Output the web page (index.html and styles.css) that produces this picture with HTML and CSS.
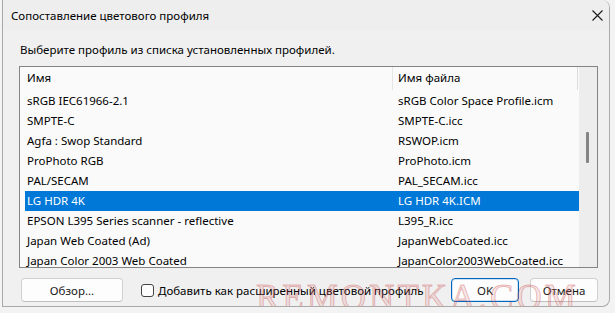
FILE: index.html
```html
<!DOCTYPE html>
<html>
<head>
	<title>Сопоставление цветового профиля</title>
	<link rel="stylesheet" href="styles.css">
</head>
<body>

	<div class="window">
		<!-- заголовок окна -->
		<div class="titlebar">
			<span class="title">Сопоставление цветового профиля</span>
			<span class="close">
				<svg width="11" height="11" viewBox="0 0 11 11"><path d="M0.5 0.5 L10.5 10.5 M10.5 0.5 L0.5 10.5" stroke="#1a1a1a" stroke-width="1.1" fill="none"/></svg>
			</span>
		</div>

		<div class="content">
			<div class="hint">Выберите профиль из списка установленных профилей.</div>

			<!-- список профилей -->
			<div class="listbox">
				<div class="list">
					<div class="row head"><span class="c1">Имя</span><span class="c2">Имя файла</span><span class="c3"></span></div>
					<div class="row"><span class="c1">sRGB IEC61966-2.1</span><span class="c2">sRGB Color Space Profile.icm</span></div>
					<div class="row"><span class="c1">SMPTE-C</span><span class="c2">SMPTE-C.icc</span></div>
					<div class="row"><span class="c1">Agfa : Swop Standard</span><span class="c2">RSWOP.icm</span></div>
					<div class="row"><span class="c1">ProPhoto RGB</span><span class="c2">ProPhoto.icm</span></div>
					<div class="row"><span class="c1">PAL/SECAM</span><span class="c2">PAL_SECAM.icc</span></div>
					<div class="row sel"><span class="c1">LG HDR 4K</span><span class="c2">LG HDR 4K.ICM</span></div>
					<div class="row"><span class="c1">EPSON L395 Series scanner - reflective</span><span class="c2">L395_R.icc</span></div>
					<div class="row"><span class="c1">Japan Web Coated (Ad)</span><span class="c2">JapanWebCoated.icc</span></div>
					<div class="row"><span class="c1">Japan Color 2003 Web Coated</span><span class="c2">JapanColor2003WebCoated.icc</span></div>
				</div>
				<div class="scrollbar"><div class="thumb"></div></div>
			</div>

			<!-- кнопки -->
			<div class="footer">
				<button class="btn browse">Обзор...</button>
				<label class="check"><span class="box"></span>Добавить как расширенный цветовой профиль</label>
				<button class="btn ok">OK</button>
				<button class="btn cancel">Отмена</button>
			</div>
		</div>

		<div class="watermark">REMONTKA.COM</div>
	</div>

</body>
</html>
```

FILE: styles.css
```css
* {
    box-sizing: border-box;
}

body {
    margin: 0;
    background: #f3f3f3;
    font-family: "Noto Sans", "Open Sans", sans-serif;
    font-size: 11.5px;
    color: #000;
}

.window {
    position: relative;
    margin-left: 2px;
    width: 608px;
    height: 307px;
    background: #f0f0f0;
    border: 1px solid #a9a9a9;
    border-top: none;
    border-radius: 0 8px 8px 0;
    overflow: hidden;
}

.titlebar {
    display: flex;
    align-items: center;
    justify-content: space-between;
    height: 30px;
    padding: 0 5px 0 8px;
    background: #eeeeee;
}

.close {
    display: flex;
    width: 14px;
    justify-content: center;
}

.content {
    padding: 0 11px 0 16px;
}

.hint {
    height: 36px;
    line-height: 16px;
    padding-top: 12px;
    padding-left: 1px;
}

.listbox {
    display: flex;
    height: 202px;
    border: 1px solid #848484;
    background: #fafafa;
    overflow: hidden;
}

.list {
    flex: 1;
    padding-left: 5px;
}

.row {
    display: flex;
    height: 20px;
    line-height: 20px;
    white-space: nowrap;
}

.row.head {
    height: 24px;
    line-height: 22px;
}

.c1 {
    width: 367px;
    padding-left: 2px;
}

.c2 {
    flex: 1;
    padding-left: 6px;
}

.head .c2 {
    border-left: 1px solid #e5e5e5;
    padding-left: 5px;
    margin-bottom: 1px;
}

.head .c3 {
    width: 2px;
    border-left: 1px solid #dcdcdc;
    margin-bottom: 1px;
}

.row.sel {
    background: #0078d7;
    color: #fff;
}

.scrollbar {
    width: 18px;
    background: #ededed;
    padding: 65px 0 0 7px;
}

.thumb {
    width: 3px;
    height: 31px;
    background: #858585;
    border-radius: 1px;
}

.footer {
    display: flex;
    align-items: center;
    padding-top: 10px;
}

.btn {
    height: 24px;
    border: 1px solid #d0d0d0;
    border-bottom-color: #c0c0c0;
    border-radius: 4px;
    background: #fdfdfd;
    font-family: inherit;
    font-size: 11.5px;
    color: #1a1a1a;
    padding: 0;
}

.browse {
    width: 102px;
    margin-left: 2px;
}

.check {
    display: flex;
    align-items: center;
    margin-left: 18px;
    flex: 1;
}

.box {
    width: 13px;
    height: 13px;
    border: 1px solid #444;
    border-radius: 3px;
    background: #fdfdfd;
    margin-right: 4px;
}

.ok {
    width: 68px;
    border: 1px solid #0067c0;
    box-shadow: inset 0 0 0 1px #cfe0f3;
}

.cancel {
    width: 68px;
    margin-left: 11px;
}

.watermark {
    position: absolute;
    left: 253px;
    top: 278px;
    font-family: "Liberation Serif", serif;
    font-size: 35px;
    letter-spacing: 3px;
    color: rgba(220, 120, 120, 0.18);
    -webkit-text-stroke: 1px rgba(200, 70, 70, 0.35);
    pointer-events: none;
}
```
